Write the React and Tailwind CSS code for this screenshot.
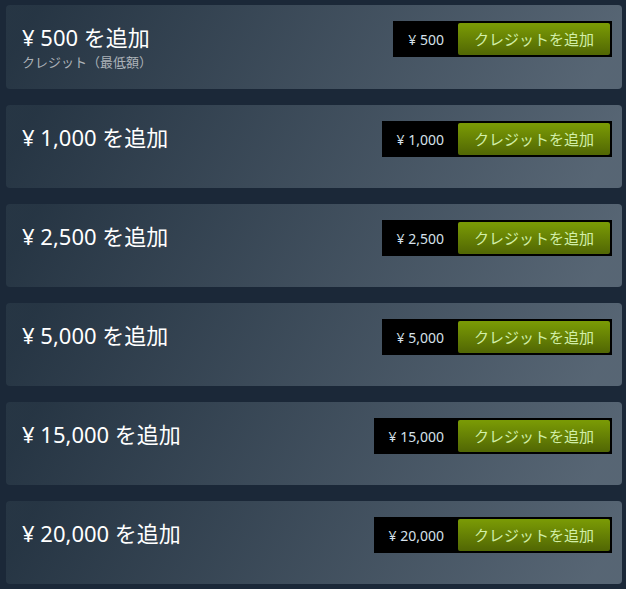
import React from "react";

const items = [
  { amount: "500", sub: "クレジット（最低額）" },
  { amount: "1,000" },
  { amount: "2,500" },
  { amount: "5,000" },
  { amount: "15,000" },
  { amount: "20,000" },
];

const font = { fontFamily: '"Noto Sans", "Noto Sans CJK JP", sans-serif' };

export default function App() {
  return (
    <div className="min-h-[589px] w-[626px] bg-[#1b2838] pt-[5px] pl-[6px]" style={font}>
      <div className="flex w-[616px] flex-col gap-4">
        {items.map((it, i) => (
          <div
            key={i}
            className={`relative flex flex-col rounded-[4px] bg-[linear-gradient(-60deg,rgba(226,244,255,0.3)_5%,rgba(84,107,115,0.2)_95%)] px-4 pt-4 ${
              it.sub ? "min-h-[84px]" : "min-h-[83px]"
            }`}
          >
            <div className="text-[22px] leading-[32px] font-normal text-white">
              ¥ {it.amount} を追加
            </div>
            {it.sub && (
              <div className="text-[13px] leading-[18px] text-[#acb2b8]">{it.sub}</div>
            )}
            <div className="absolute top-4 right-[10px] flex h-[36px] items-center bg-black p-[2px]">
              <div className="px-[13px] text-[14px] text-[#d6e1ea]">¥ {it.amount}</div>
              <div className="ml-[1px] flex h-[32px] items-center rounded-[2px] bg-[linear-gradient(to_bottom,#799905_5%,#536904_95%)] px-4 text-[15px] text-[#d2efa9]">
                クレジットを追加
              </div>
            </div>
          </div>
        ))}
      </div>
    </div>
  );
}
